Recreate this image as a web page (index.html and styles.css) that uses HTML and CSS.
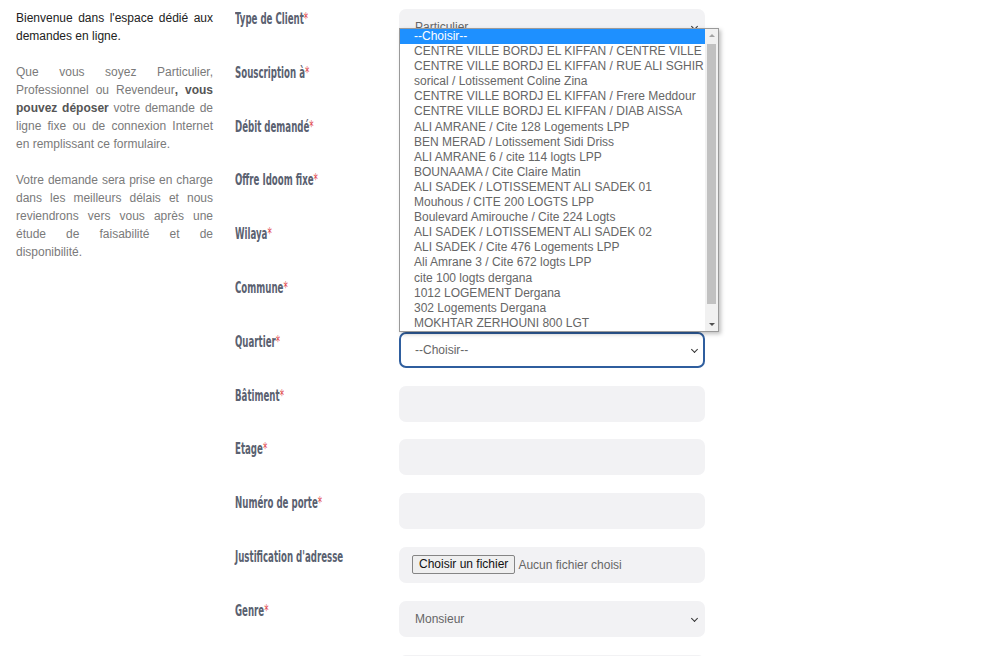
FILE: index.html
```html
<!DOCTYPE html>
<html lang="fr">
<head>
<meta charset="utf-8">
<title>Demande en ligne</title>
<link rel="stylesheet" href="styles.css">
</head>
<body>
<div class="page">
  <aside class="intro">
    <p class="lead">Bienvenue dans l'espace dédié aux demandes en ligne.</p>
    <p>Que vous soyez Particulier, Professionnel ou Revendeur<b>, vous pouvez déposer</b> votre demande de ligne fixe ou de connexion Internet en remplissant ce formulaire.</p>
    <p>Votre demande sera prise en charge dans les meilleurs délais et nous reviendrons vers vous après une étude de faisabilité et de disponibilité.</p>
  </aside>
  <form class="form">
    <div class="row"><label class="lbl">Type de Client<span class="req">*</span></label><div class="field select"><span class="val">Particulier</span><span class="chev"></span></div></div>
    <div class="row"><label class="lbl">Souscription à<span class="req">*</span></label><div class="field select"><span class="chev"></span></div></div>
    <div class="row"><label class="lbl">Débit demandé<span class="req">*</span></label><div class="field select"><span class="chev"></span></div></div>
    <div class="row"><label class="lbl">Offre Idoom fixe<span class="req">*</span></label><div class="field select"><span class="chev"></span></div></div>
    <div class="row"><label class="lbl">Wilaya<span class="req">*</span></label><div class="field select"><span class="chev"></span></div></div>
    <div class="row"><label class="lbl">Commune<span class="req">*</span></label><div class="field select"><span class="chev"></span></div></div>
    <div class="row"><label class="lbl">Quartier<span class="req">*</span></label><div class="field select focus"><span class="val">--Choisir--</span><span class="chev"></span></div></div>
    <div class="row"><label class="lbl">Bâtiment<span class="req">*</span></label><div class="field"></div></div>
    <div class="row"><label class="lbl">Etage<span class="req">*</span></label><div class="field"></div></div>
    <div class="row"><label class="lbl">Numéro de porte<span class="req">*</span></label><div class="field"></div></div>
    <div class="row"><label class="lbl">Justification d'adresse</label><div class="field file"><span class="fbtn">Choisir un fichier</span><span class="fname">Aucun fichier choisi</span></div></div>
    <div class="row"><label class="lbl">Genre<span class="req">*</span></label><div class="field select"><span class="val">Monsieur</span><span class="chev"></span></div></div>
    <div class="row"><label class="lbl"></label><div class="field"></div></div>
  </form>
  <div class="dropdown">
    <ul class="opts">
      <li class="sel">--Choisir--</li>
      <li>CENTRE VILLE BORDJ EL KIFFAN / CENTRE VILLE</li>
      <li>CENTRE VILLE BORDJ EL KIFFAN / RUE ALI SGHIR</li>
      <li>sorical / Lotissement Coline Zina</li>
      <li>CENTRE VILLE BORDJ EL KIFFAN / Frere Meddour</li>
      <li>CENTRE VILLE BORDJ EL KIFFAN / DIAB AISSA</li>
      <li>ALI AMRANE / Cite 128 Logements LPP</li>
      <li>BEN MERAD / Lotissement Sidi Driss</li>
      <li>ALI AMRANE 6 / cite 114 logts LPP</li>
      <li>BOUNAAMA / Cite Claire Matin</li>
      <li>ALI SADEK / LOTISSEMENT ALI SADEK 01</li>
      <li>Mouhous / CITE 200 LOGTS LPP</li>
      <li>Boulevard Amirouche / Cite 224 Logts</li>
      <li>ALI SADEK / LOTISSEMENT ALI SADEK 02</li>
      <li>ALI SADEK / Cite 476 Logements LPP</li>
      <li>Ali Amrane 3 / Cite 672 logts LPP</li>
      <li>cite 100 logts dergana</li>
      <li>1012 LOGEMENT Dergana</li>
      <li>302 Logements Dergana</li>
      <li>MOKHTAR ZERHOUNI 800 LGT</li>
    </ul>
    <div class="sbar">
      <span class="arrow up"></span>
      <span class="thumb"></span>
      <span class="arrow down"></span>
    </div>
  </div>
</div>
</body>
</html>
```

FILE: styles.css
```css
* { box-sizing: border-box; }
html, body { margin: 0; padding: 0; background: #fff; }
body { width: 1000px; height: 656px; overflow: hidden; font-family: "Liberation Sans", Arial, sans-serif; }

.page { position: relative; display: flex; padding-left: 16px; height: 656px; overflow: hidden; }

.intro { width: 197px; flex: none; padding-top: 9px; font-size: 12px; line-height: 18px; color: #7a7a7a; text-align: justify; }
.intro p { margin: 0 0 18px; }
.intro p.lead { color: #222; }
.intro b { color: #555; font-weight: bold; }

.form { margin-left: 22px; padding-top: 9px; display: flex; flex-direction: column; gap: 17.8px; }
.row { display: flex; height: 36px; flex: none; }
.lbl { width: 164px; flex: none; padding-top: 1px; font-family: "DejaVu Sans Condensed", "DejaVu Sans", sans-serif; font-stretch: condensed; font-weight: bold; font-size: 15px; line-height: 18px; color: #5a6170; white-space: nowrap; transform: scaleX(0.64); transform-origin: 0 0; }
.req { color: #e0474c; font-weight: normal; }

.field { width: 306px; height: 36px; border-radius: 7px; background: #f2f2f4; display: flex; align-items: center; padding: 0 16px; font-size: 12px; color: #666; position: relative; }
.select .val { flex: 1; }
.select .chev { position: absolute; right: 8px; top: 15px; width: 5px; height: 5px; border-right: 1.6px solid #333; border-bottom: 1.6px solid #333; transform: rotate(45deg); }
.focus { background: #fff; border: 2px solid #2f5e9e; padding-left: 14px; }
.focus .chev { right: 6px; top: 13px; }
.file { padding-left: 13px; }
.fbtn { font-size: 12px; color: #111; background: #efefef; border: 1px solid #858585; border-radius: 2px; padding: 1px 6px; margin-right: 3px; line-height: 15px; }
.fname { color: #666; }

.dropdown { position: absolute; left: 399px; top: 28px; width: 320px; height: 304px; background: #fff; border: 1px solid #9a9a9a; box-shadow: 2px 2px 4px rgba(0,0,0,0.25); display: flex; }
.opts { list-style: none; margin: 0; padding: 0; flex: 1; font-size: 12px; line-height: 15.1px; color: #666; }
.opts li { padding-left: 14px; white-space: nowrap; overflow: hidden; }
.opts li.sel { background: #1e90ff; color: #fff; }
.sbar { width: 13px; flex: none; background: #f1f1f1; display: flex; flex-direction: column; align-items: center; }
.arrow { width: 0; height: 0; border-left: 3px solid transparent; border-right: 3px solid transparent; margin: 5px 0; }
.arrow.up { border-bottom: 3px solid #a3a3a3; }
.arrow.down { border-top: 3px solid #505050; }
.thumb { flex: 1; width: 9px; background: #c1c1c1; margin: 2px 0 14px; }
```
